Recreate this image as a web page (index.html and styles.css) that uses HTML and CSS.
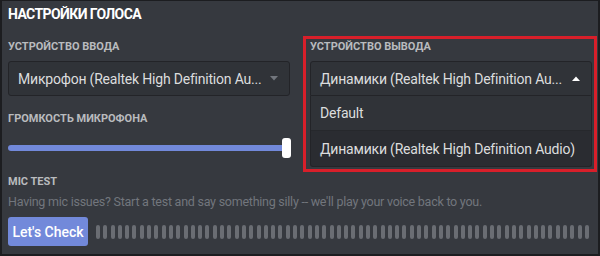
FILE: index.html
```html
<!DOCTYPE html>
<html lang="ru">
<head>
<meta charset="utf-8">
<link rel="stylesheet" href="styles.css">
</head>
<body>
<div class="frame">
  <h1 class="title">НАСТРОЙКИ ГОЛОСА</h1>
  <div class="devices">
    <div class="col">
      <div class="label">Устройство ввода</div>
      <div class="select">
        <span class="select-text">Микрофон (Realtek High Definition Au...</span>
        <svg class="caret" width="8" height="5" viewBox="0 0 8 5"><path d="M0 0h8L4 4.5z" fill="#72767d"/></svg>
      </div>
    </div>
    <div class="col col-out">
      <div class="label">Устройство вывода</div>
      <div class="select open">
        <span class="select-text">Динамики (Realtek High Definition Au...</span>
        <svg class="caret" width="8" height="5" viewBox="0 0 8 5"><path d="M0 5h8L4 0.5z" fill="#ffffff"/></svg>
      </div>
      <div class="menu">
        <div class="option option-hover">Default</div>
        <div class="option">Динамики (Realtek High Definition Audio)</div>
      </div>
      <div class="highlight"></div>
    </div>
  </div>
  <div class="label label-vol">Громкость микрофона</div>
  <div class="slider">
    <div class="track"></div>
    <div class="knob"></div>
  </div>
  <div class="label label-test">Mic Test</div>
  <p class="desc">Having mic issues? Start a test and say something silly -- we'll play your voice back to you.</p>
  <div class="test-row">
    <button class="btn">Let's Check</button>
    <div class="meter">
      <i></i><i></i><i></i><i></i><i></i><i></i><i></i><i></i><i></i><i></i>
      <i></i><i></i><i></i><i></i><i></i><i></i><i></i><i></i><i></i><i></i>
      <i></i><i></i><i></i><i></i><i></i><i></i><i></i><i></i><i></i><i></i>
      <i></i><i></i><i></i><i></i><i></i><i></i><i></i><i></i><i></i><i></i>
      <i></i><i></i><i></i><i></i><i></i><i></i><i></i><i></i><i></i><i></i>
      <i></i><i></i><i></i><i></i><i></i><i></i><i></i><i></i><i></i><i></i>
      <i></i><i></i><i></i><i></i><i></i><i></i><i></i><i></i>
    </div>
  </div>
</div>
</body>
</html>
```
FILE: styles.css
```css
* { box-sizing: border-box; }
html, body { margin: 0; padding: 0; background: #1c1d20; }
body { width: 600px; height: 256px; overflow: hidden; }
.frame {
  width: 600px;
  height: 256px;
  background: #36393f;
  border: 2px solid #1c1d20;
  border-top-width: 1px;
  padding: 0 6px;
  font-family: "Roboto", "Noto Sans", sans-serif;
  color: #dcddde;
}
.title {
  margin: 4px 0 0;
  font-size: 14px;
  line-height: 18px;
  font-weight: 700;
  letter-spacing: -0.6px;
  color: #ffffff;
}
.devices {
  display: grid;
  grid-template-columns: 282px 282px;
  column-gap: 20px;
  margin-top: 17px;
}
.col { position: relative; }
.label {
  font-size: 11px;
  line-height: 14px;
  font-weight: 700;
  text-transform: uppercase;
  color: #b9bbbe;
}
.select {
  margin-top: 7px;
  height: 35px;
  background: #303338;
  border: 1px solid #232428;
  border-radius: 3px;
  display: flex;
  align-items: center;
  justify-content: space-between;
  padding: 0 11px 0 9px;
}
.select.open { border-radius: 3px 3px 0 0; }
.select-text {
  font-size: 14px;
  letter-spacing: -0.2px;
  color: #dcddde;
  white-space: nowrap;
}
.caret { flex: none; }
.menu {
  position: absolute;
  left: 0;
  right: 0;
  top: 56px;
  background: #2a2c31;
  border: 1px solid #232428;
  border-top: none;
  border-radius: 0 0 3px 3px;
  z-index: 2;
}
.option {
  height: 35px;
  display: flex;
  align-items: center;
  padding: 0 9px;
  font-size: 14px;
  letter-spacing: -0.2px;
  color: #dcddde;
  white-space: nowrap;
}
.option-hover { background: #303338; border-bottom: 1px solid #26282c; }
.highlight {
  position: absolute;
  left: -7px;
  right: -5px;
  top: -4px;
  height: 136px;
  border: 3px solid #d81f2a;
  z-index: 3;
  pointer-events: none;
}
.label-vol { margin-top: 16px; }
.slider {
  position: relative;
  width: 284px;
  height: 20px;
  margin-top: 12px;
  display: flex;
  align-items: center;
}
.track {
  width: 280px;
  height: 6px;
  border-radius: 3px;
  background: #7289da;
}
.knob {
  position: absolute;
  left: 274px;
  top: 0;
  width: 9px;
  height: 20px;
  border-radius: 3px;
  background: #ffffff;
}
.label-test { margin-top: 17px; }
.desc {
  margin: 4px 0 0;
  font-size: 12.5px;
  letter-spacing: -0.25px;
  line-height: 18px;
  color: #72767d;
  white-space: nowrap;
}
.test-row {
  margin-top: 6px;
  display: flex;
  align-items: center;
  gap: 8px;
}
.btn {
  width: 80px;
  height: 29px;
  border: none;
  border-radius: 3px;
  background: #7289da;
  color: #ffffff;
  font-family: "Roboto", "Noto Sans", sans-serif;
  font-size: 14px;
  font-weight: 500;
  padding: 0;
}
.meter {
  width: 493px;
  height: 14px;
  display: flex;
  justify-content: space-between;
}
.meter i {
  display: block;
  width: 4px;
  height: 14px;
  border-radius: 2px;
  background: #6a6d73;
}
```
